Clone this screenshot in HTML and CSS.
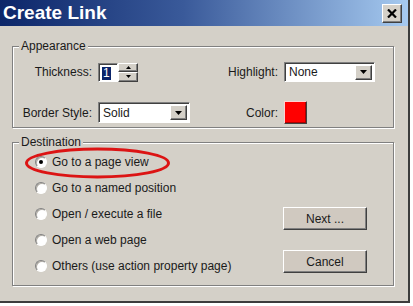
FILE: index.html
```html
<!DOCTYPE html>
<html lang="en">

<head>
    <meta charset="UTF-8">
    <meta name="viewport" content="width=device-width, initial-scale=1.0">
    <title>Create Link</title>
    <link rel="stylesheet" href="styles.css">
</head>

<body>
    <div class="dialog">
        <div class="titlebar">
            <span class="title">Create Link</span>
            <button class="close raised" aria-label="Close">
                <svg width="10" height="9" viewBox="0 0 10 9">
                    <path d="M1 0.5 L9 8.5 M9 0.5 L1 8.5" stroke="#000" stroke-width="2.2" fill="none"/>
                </svg>
            </button>
        </div>

        <div class="content">
            <fieldset class="group appearance">
                <legend>Appearance</legend>
                <div class="props">
                    <label class="lbl">Thickness:</label>
                    <div class="spinner">
                        <div class="spin-field sunken"><span class="selected">1</span></div>
                        <div class="spin-btns">
                            <span class="spin raised"><svg width="5" height="3" viewBox="0 0 5 3"><path d="M2.5 0 L5 3 L0 3 Z" fill="#000"/></svg></span>
                            <span class="spin raised"><svg width="5" height="3" viewBox="0 0 5 3"><path d="M0 0 L5 0 L2.5 3 Z" fill="#000"/></svg></span>
                        </div>
                    </div>
                    <label class="lbl">Highlight:</label>
                    <div class="select sunken">
                        <span class="value">None</span>
                        <span class="drop raised"><svg width="7" height="4" viewBox="0 0 7 4"><path d="M0 0 L7 0 L3.5 4 Z" fill="#000"/></svg></span>
                    </div>

                    <label class="lbl">Border Style:</label>
                    <div class="select sunken border-style">
                        <span class="value">Solid</span>
                        <span class="drop raised"><svg width="7" height="4" viewBox="0 0 7 4"><path d="M0 0 L7 0 L3.5 4 Z" fill="#000"/></svg></span>
                    </div>
                    <label class="lbl">Color:</label>
                    <div class="swatch"></div>
                </div>
            </fieldset>

            <fieldset class="group destination">
                <legend>Destination</legend>
                <div class="dest">
                    <ul class="radios">
                        <li><span class="radio checked"></span>Go to a page view</li>
                        <li><span class="radio"></span>Go to a named position</li>
                        <li><span class="radio"></span>Open / execute a file</li>
                        <li><span class="radio"></span>Open a web page</li>
                        <li><span class="radio"></span>Others (use action property page)</li>
                    </ul>
                    <div class="buttons">
                        <button class="btn raised">Next ...</button>
                        <button class="btn raised">Cancel</button>
                    </div>
                </div>
            </fieldset>
        </div>

        <svg class="mark" width="150" height="34" viewBox="0 0 150 34">
            <ellipse cx="73.5" cy="16" rx="71" ry="14" fill="none" stroke="#dc1414" stroke-width="3"/>
        </svg>
    </div>
</body>

</html>
```

FILE: styles.css
```css
body {
    margin: 0;
    background: #fff;
    font-family: "Liberation Sans", Arial, sans-serif;
    font-size: 12px;
    color: #1a1a1a;
}

.dialog {
    position: relative;
    width: 408px;
    height: 301px;
    background: #d4d0c8;
    border-right: 2px solid #3c3c3c;
    border-bottom: 2px solid #3c3c3c;
}

.raised {
    border: 1px solid;
    border-color: #fff #404040 #404040 #fff;
    box-shadow: inset -1px -1px 0 #808080;
    background: #d4d0c8;
}

.sunken {
    border: 1px solid;
    border-color: #808080 #fff #fff #808080;
    box-shadow: inset 1px 1px 0 #404040;
    background: #fff;
}

/* title bar */
.titlebar {
    height: 26px;
    display: flex;
    align-items: center;
    justify-content: space-between;
    padding: 0 6px 0 3px;
    background: linear-gradient(to right, #0c2669, #3a5a9a 45%, #a6caf0);
}

.title {
    font-weight: bold;
    font-size: 19px;
    color: #fff;
}

.close {
    width: 20px;
    height: 19px;
    padding: 0;
    display: flex;
    align-items: center;
    justify-content: center;
}

/* body */
.content {
    padding: 13px 14px 0 12px;
}

.group {
    margin: 0;
    border: 1px solid #808080;
    box-shadow: 1px 1px 0 #fff, inset 1px 1px 0 #fff;
    padding: 9px 18px 4px 9px;
}

.group legend {
    line-height: 14px;
    padding: 0 2px;
    margin-left: -3px;
    background: #d4d0c8;
}

.props {
    display: grid;
    grid-template-columns: 70px 1fr auto 91px;
    grid-template-rows: 20px 21px;
    column-gap: 6px;
    row-gap: 20px;
    align-items: center;
}

.lbl {
    justify-self: end;
    white-space: nowrap;
}

.spinner {
    display: flex;
    width: 40px;
    height: 19px;
}

.spin-field {
    width: 20px;
    box-sizing: border-box;
    padding: 2px 0 0 3px;
}

.selected {
    display: inline-block;
    background: #0a246a;
    color: #fff;
    line-height: 13px;
    padding: 0 1px;
}

.spin-btns {
    display: flex;
    flex-direction: column;
    width: 20px;
}

.spin {
    flex: 1;
    display: flex;
    align-items: center;
    justify-content: center;
}

.select {
    display: flex;
    align-items: center;
    height: 20px;
    box-sizing: border-box;
    padding: 2px 2px 2px 4px;
}

.select .value {
    flex: 1;
}

.border-style {
    width: 92px;
    height: 21px;
}

.drop {
    width: 17px;
    height: 15px;
    box-sizing: border-box;
    display: flex;
    align-items: center;
    justify-content: center;
}

.swatch {
    width: 23px;
    height: 23px;
    box-sizing: border-box;
    background: #f00;
    border: 1px solid;
    border-color: #ffd0d0 #404040 #404040 #ffd0d0;
    box-shadow: inset -1px -1px 0 #a00;
}

.destination {
    margin-top: 7px;
    padding-top: 0;
    padding-bottom: 6px;
}

.dest {
    display: flex;
    justify-content: space-between;
}

.radios {
    list-style: none;
    margin: 0;
    padding: 0 0 0 13px;
}

.radios li {
    height: 26px;
    display: flex;
    align-items: center;
}

.radio {
    width: 12px;
    height: 12px;
    box-sizing: border-box;
    border-radius: 50%;
    margin-right: 5px;
    background: #fff;
    border: 1px solid;
    border-color: #808080 #fff #fff #808080;
    box-shadow: inset 1px 1px 0 #b0aca4;
    position: relative;
}

.radio.checked::after {
    content: "";
    position: absolute;
    left: 3px;
    top: 3px;
    width: 4px;
    height: 4px;
    border-radius: 50%;
    background: #000;
}

.buttons {
    display: flex;
    flex-direction: column;
    gap: 20px;
    margin: 58px 8px 0 0;
}

.btn {
    width: 84px;
    height: 23px;
    font-family: "Liberation Sans", Arial, sans-serif;
    font-size: 12px;
    color: #1a1a1a;
    background: #d0c9c0;
}

.mark {
    position: absolute;
    left: 24px;
    top: 147px;
}
```
